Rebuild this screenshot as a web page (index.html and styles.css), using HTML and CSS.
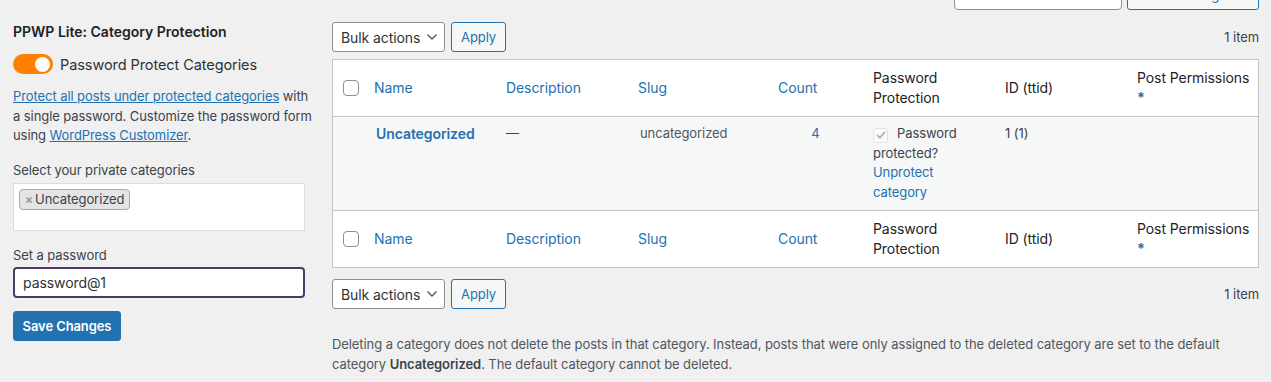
FILE: index.html
```html
<!DOCTYPE html>
<html>
<head>
<meta charset="utf-8">
<link rel="stylesheet" href="styles.css">
</head>
<body>
<div class="page">
  <aside class="side">
    <h2 class="side-title">PPWP Lite: Category Protection</h2>
    <div class="toggle-row">
      <span class="toggle"><span class="knob"></span></span>
      <span class="toggle-label">Password Protect Categories</span>
    </div>
    <p class="desc"><a href="#">Protect all posts under protected categories</a> with a single password. Customize the password form using <a href="#">WordPress Customizer</a>.</p>
    <label class="field-label">Select your private categories</label>
    <div class="multi">
      <span class="chip"><span class="chip-x">×</span>Uncategorized</span>
    </div>
    <label class="field-label pw-label">Set a password</label>
    <div class="pw-input">password@1</div>
    <button class="save">Save Changes</button>
  </aside>

  <main class="main">
    <div class="search-row">
      <div class="search-input"></div>
      <button class="btn-secondary search-btn">Search Categories</button>
    </div>

    <div class="tablenav top">
      <div class="actions">
        <div class="select">Bulk actions
          <svg class="chev" width="12" height="8" viewBox="0 0 12 8"><path d="M1.5 1.5 L6 6 L10.5 1.5" fill="none" stroke="#50575e" stroke-width="1.4"/></svg>
        </div>
        <button class="btn-secondary">Apply</button>
      </div>
      <span class="count-items">1 item</span>
    </div>

    <table class="list">
      <colgroup>
        <col class="c-check"><col class="c-name"><col class="c-desc"><col class="c-slug"><col class="c-count"><col class="c-pw"><col class="c-id"><col class="c-perm">
      </colgroup>
      <thead>
        <tr>
          <th class="check"><span class="cb"></span></th>
          <th><a href="#">Name</a></th>
          <th><a href="#">Description</a></th>
          <th><a href="#">Slug</a></th>
          <th class="count-h"><a href="#">Count</a></th>
          <th class="pw-col">Password Protection</th>
          <th>ID (ttid)</th>
          <th class="perm">Post Permissions<br><span class="star">*</span></th>
        </tr>
      </thead>
      <tbody>
        <tr>
          <td></td>
          <td><a href="#" class="row-title">Uncategorized</a></td>
          <td class="dash">—</td>
          <td class="slug">uncategorized</td>
          <td class="num"><a href="#">4</a></td>
          <td class="pw-col"><span class="cb-dis"><svg width="12" height="12" viewBox="0 0 12 12"><path d="M2.2 6.2 L4.8 8.8 L10 3" fill="none" stroke="#b3a9cc" stroke-width="1.8"/></svg></span>Password protected? <a href="#">Unprotect category</a></td>
          <td class="idc">1 (1)</td>
          <td></td>
        </tr>
      </tbody>
      <tfoot>
        <tr>
          <th class="check"><span class="cb"></span></th>
          <th><a href="#">Name</a></th>
          <th><a href="#">Description</a></th>
          <th><a href="#">Slug</a></th>
          <th class="count-h"><a href="#">Count</a></th>
          <th class="pw-col">Password Protection</th>
          <th>ID (ttid)</th>
          <th class="perm">Post Permissions<br><span class="star">*</span></th>
        </tr>
      </tfoot>
    </table>

    <div class="tablenav bottom">
      <div class="actions">
        <div class="select">Bulk actions
          <svg class="chev" width="12" height="8" viewBox="0 0 12 8"><path d="M1.5 1.5 L6 6 L10.5 1.5" fill="none" stroke="#50575e" stroke-width="1.4"/></svg>
        </div>
        <button class="btn-secondary">Apply</button>
      </div>
      <span class="count-items">1 item</span>
    </div>

    <p class="note">Deleting a category does not delete the posts in that category. Instead, posts that were only assigned to the deleted category are set to the default category <strong>Uncategorized</strong>. The default category cannot be deleted.</p>
  </main>
</div>
</body>
</html>
```
FILE: styles.css
```css
* { box-sizing: border-box; }
html, body { margin: 0; padding: 0; }
body {
  background: #f0f0f1;
  font-family: Inter, "Liberation Sans", Arial, sans-serif;
  font-size: 13px;
  letter-spacing: -0.08px;
  color: #3c434a;
  overflow: hidden;
}
a { color: #2271b1; }

.page {
  display: flex;
  gap: 19px;
  padding: 0 12px 0 13px;
}

/* sidebar */
.side {
  width: 300px;
  flex: none;
  padding-top: 22px;
}
.side-title {
  margin: 0;
  font-size: 14px;
  line-height: 20px;
  color: #1d2327;
  font-weight: 600;
  letter-spacing: 0;
}
.toggle-row {
  display: flex;
  align-items: center;
  gap: 7px;
  margin-top: 12px;
  height: 20px;
}
.toggle {
  width: 40px;
  height: 20px;
  border-radius: 10px;
  background: #ff8000;
  display: flex;
  align-items: center;
  justify-content: flex-end;
  padding-right: 3px;
}
.knob {
  width: 15px;
  height: 15px;
  border-radius: 50%;
  background: #fff;
}
.toggle-label {
  font-size: 14.5px;
  color: #2c3338;
}
.desc {
  margin: 13px 0 0;
  line-height: 19.5px;
}
.field-label {
  display: block;
  margin-top: 15px;
  line-height: 19px;
}
.multi {
  width: 292px;
  height: 48px;
  margin-top: 3px;
  background: #fff;
  border: 1px solid #dcdcde;
  padding: 5px 5px;
}
.chip {
  display: inline-flex;
  align-items: center;
  height: 21px;
  padding: 0 4px 0 5px;
  background: #e4e4e4;
  border: 1px solid #aaa;
  border-radius: 4px;
  font-size: 13px;
  color: #3c434a;
}
.chip-x {
  color: #999;
  font-weight: 700;
  font-size: 12px;
  margin-right: 2px;
}
.pw-label { margin-top: 15px; }
.pw-input {
  width: 292px;
  height: 31px;
  margin-top: 2px;
  border: 2px solid #4b3d6b;
  border-radius: 4px;
  background: #fff;
  font-size: 14px;
  color: #2c3338;
  padding: 0 8px;
  line-height: 27px;
}
.save {
  display: block;
  margin-top: 13px;
  height: 30px;
  width: 108px;
  background: #2271b1;
  color: #fff;
  border: 1px solid #2271b1;
  border-radius: 3px;
  font-family: inherit;
  font-size: 13px;
  font-weight: 600;
  letter-spacing: -0.1px;
  padding: 0;
}

/* main */
.main {
  width: 927px;
  flex: none;
}
.search-row {
  display: flex;
  justify-content: flex-end;
  gap: 5px;
  margin-top: -20px;
  height: 30px;
}
.search-input {
  width: 168px;
  height: 30px;
  background: #fff;
  border: 1px solid #8c8f94;
  border-radius: 4px;
}
.btn-secondary {
  height: 30px;
  padding: 0 9px;
  background: #f6f7f7;
  border: 1px solid #2271b1;
  border-radius: 3px;
  color: #2271b1;
  font-family: inherit;
  font-size: 13px;
  letter-spacing: inherit;
  white-space: nowrap;
}
.search-btn { width: 132px; padding: 0; }

.tablenav {
  display: flex;
  align-items: center;
  justify-content: space-between;
  height: 30px;
}
.tablenav.top { margin-top: 12px; }
.tablenav.bottom { margin-top: 11px; }
.actions {
  display: flex;
  gap: 6px;
}
.select {
  width: 113px;
  height: 30px;
  background: #fff;
  border: 1px solid #8c8f94;
  border-radius: 3px;
  font-size: 14px;
  color: #2c3338;
  display: flex;
  align-items: center;
  justify-content: space-between;
  padding: 0 6px 0 8px;
}
.chev { flex: none; }
.count-items { color: #3c434a; }

.list {
  margin-top: 7px;
  width: 927px;
  table-layout: fixed;
  border-collapse: separate;
  border-spacing: 0;
  border: 1px solid #c3c4c7;
  background: #fff;
}
.c-check { width: 33px; }
.c-name, .c-desc, .c-slug, .c-pw, .c-id { width: 132px; }
.c-count { width: 103px; }
.c-perm { width: 129px; }

.list th {
  text-align: left;
  font-weight: 400;
  font-size: 14px;
  line-height: 20px;
  color: #1d2327;
  padding: 8px;
  vertical-align: middle;
  height: 56px;
}
.list th a { text-decoration: none; }
.list thead th { border-bottom: 1px solid #c3c4c7; }
.list tfoot th { border-top: 1px solid #c3c4c7; }
.list th.check { padding: 0 0 0 10px; }
.cb {
  display: block;
  width: 16px;
  height: 16px;
  border: 1px solid #8c8f94;
  border-radius: 4px;
  background: #fff;
}
.list th.count-h { padding-left: 16px; }
.list th.pw-col, .list td.pw-col { padding-right: 24px; }
.list th.perm { padding-right: 4px; white-space: nowrap; }
.star { color: #2271b1; font-weight: 700; }

.list tbody td {
  background: #f6f7f7;
  vertical-align: top;
  padding: 7px 8px 8px;
  line-height: 19.5px;
  font-size: 13px;
  color: #3c434a;
}
.row-title {
  font-size: 14px;
  font-weight: 600;
  text-decoration: none;
  padding-left: 2px;
}
.list td.dash { color: #3c434a; }
.list td.slug { color: #50575e; padding-left: 10px; }
.list td.num { text-align: center; padding-left: 12px; }
.list td.num a { text-decoration: none; }
.list td.pw-col a { text-decoration: none; }
.cb-dis {
  display: inline-flex;
  align-items: center;
  justify-content: center;
  width: 15px;
  height: 15px;
  border: 1px solid #e2e2e4;
  border-radius: 3px;
  background: #fafafa;
  vertical-align: -3px;
  margin-right: 9px;
}

.note {
  margin: 25px 0 0;
  line-height: 20px;
  color: #50575e;
}
.note strong { color: #3c434a; font-weight: 600; }
```
